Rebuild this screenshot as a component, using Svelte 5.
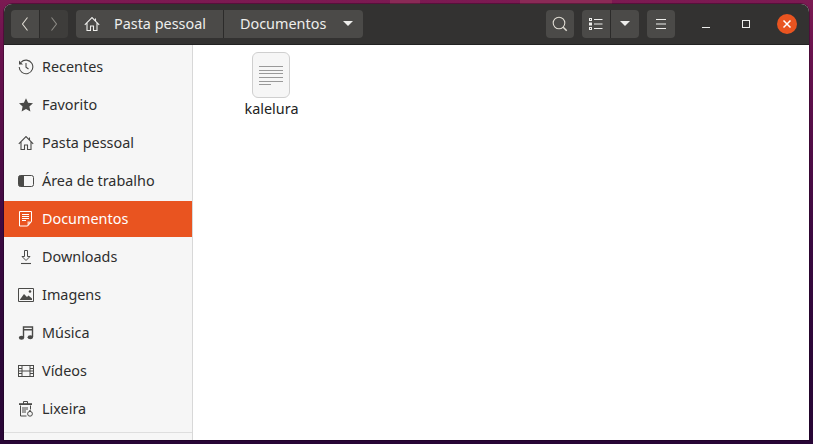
<script lang="ts">
  const places = [
    { name: 'Recentes', icon: 'recent' },
    { name: 'Favorito', icon: 'star' },
    { name: 'Pasta pessoal', icon: 'home' },
    { name: 'Área de trabalho', icon: 'desktop' },
    { name: 'Documentos', icon: 'docs', active: true },
    { name: 'Downloads', icon: 'download' },
    { name: 'Imagens', icon: 'image' },
    { name: 'Música', icon: 'music' },
    { name: 'Vídeos', icon: 'video' },
    { name: 'Lixeira', icon: 'trash' }
  ];
</script>

{#snippet homeIcon()}
  <path d="M.8 8.800 8 1.500l7.200 7.300M3 7v7.500h3.500v-4.500h3v4.500H13V7M11.500 2.500v2.500" fill="none" stroke="currentColor" stroke-width="1.100" />
{/snippet}

<div class="wallpaper">
  <div class="window">
    <header class="titlebar">
      <div class="group nav">
        <button class="tb-btn back" aria-label="Voltar">
          <svg width="16" height="16" viewBox="0 0 16 16"><path d="M10.500 1.500 5.500 8l5 6.500" fill="none" stroke="#dfdbd2" stroke-width="1.100" /></svg>
        </button>
        <button class="tb-btn forward" aria-label="Avançar">
          <svg width="16" height="16" viewBox="0 0 16 16"><path d="M5.500 1.500 10.500 8l-5 6.500" fill="none" stroke="#8d8b86" stroke-width="1.100" /></svg>
        </button>
      </div>

      <div class="group path">
        <button class="crumb home">
          <svg class="home-icon" width="16" height="16" viewBox="0 0 16 16">{@render homeIcon()}</svg>
          <span>Pasta pessoal</span>
        </button>
        <button class="crumb current">
          <span>Documentos</span>
          <i class="caret"></i>
        </button>
      </div>

      <div class="spacer"></div>

      <button class="tb-btn solo" aria-label="Pesquisar">
        <svg width="16" height="16" viewBox="0 0 16 16"><circle cx="7" cy="7" r="5.800" fill="none" stroke="#dfdbd2" stroke-width="1.100" /><path d="m11.200 11.200 3.500 3.500" stroke="#dfdbd2" stroke-width="1.500" /></svg>
      </button>

      <div class="group view">
        <button class="tb-btn list" aria-label="Lista">
          <svg width="14" height="14" viewBox="0 0 14 14">
            <g fill="none" stroke="#eeeeec"><rect x=".5" y="1.500" width="2" height="2" /><rect x=".5" y="6" width="2" height="2" /><rect x=".5" y="10.500" width="2" height="2" /></g>
            <path d="M5 2.500h8.500M5 7h8.500M5 11.500h8.500" stroke="#eeeeec" />
          </svg>
        </button>
        <button class="tb-btn drop" aria-label="Opções de visão"><i class="caret"></i></button>
      </div>

      <button class="tb-btn solo menu" aria-label="Menu">
        <svg width="14" height="14" viewBox="0 0 14 14"><path d="M2 2.500h10M2 7h10M2 11.500h10" stroke="#eeeeec" /></svg>
      </button>

      <div class="wm">
        <span class="wm-min"></span>
        <span class="wm-max"></span>
        <span class="wm-close">
          <svg width="10" height="10" viewBox="0 0 10 10"><path d="m1.500 1.500 7 7m0-7-7 7" stroke="#fff" stroke-width="1.500" /></svg>
        </span>
      </div>
    </header>

    <div class="body">
      <aside class="sidebar">
        <ul>
          {#each places as p}
            <li class:active={p.active}>
              <svg class="icon" width="16" height="16" viewBox="0 0 16 16">
                {#if p.icon === 'recent'}
                  <path d="M3 3.300A6.800 6.800 0 1 1 1.200 8" fill="none" stroke="currentColor" stroke-width="1.100" />
                  <path d="M1 1.500v4h4z" fill="currentColor" />
                  <path d="M8 4v4.300l2.500 1.700" fill="none" stroke="currentColor" stroke-width="1.100" />
                {:else if p.icon === 'star'}
                  <path d="m8 1.200 2.100 4.500 4.900.6-3.600 3.300 1 4.900L8 12.100l-4.400 2.400 1-4.900L1 6.300l4.900-.6z" fill="currentColor" />
                {:else if p.icon === 'home'}
                  {@render homeIcon()}
                {:else if p.icon === 'desktop'}
                  <rect x=".5" y="2.500" width="15" height="11" rx="2" fill="none" stroke="currentColor" />
                  <path d="M2.500 2.500H6v11H2.500a2 2 0 0 1-2-2v-7a2 2 0 0 1 2-2z" fill="currentColor" />
                {:else if p.icon === 'docs'}
                  <path d="M1.500 .5h12v10l-4 4.500h-8z" fill="none" stroke="currentColor" />
                  <path d="M9.500 15.500v-5h4.500z" fill="currentColor" opacity=".7" />
                  <path d="M4 3.500h7M4 5.500h7M4 7.500h7M4 9.500h4" stroke="currentColor" />
                {:else if p.icon === 'download'}
                  <path d="M6.500 1.500h3v6H12L8 11.500 4 7.500h2.500z" fill="none" stroke="currentColor" />
                  <path d="M3 14.500h10" stroke="currentColor" stroke-width="1.100" />
                {:else if p.icon === 'image'}
                  <path d="M.5 1.500h15v13H.5z" fill="none" stroke="currentColor" />
                  <path d="M2 12.500 6 7l3 3 1.500-1.500 3.500 3v1.500H2z" fill="currentColor" />
                  <circle cx="12" cy="4.500" r="1.300" fill="currentColor" />
                {:else if p.icon === 'music'}
                  <path d="M5.500 12.500V2h9v10M5.500 4.800h9" fill="none" stroke="currentColor" stroke-width="1.400" />
                  <ellipse cx="3.500" cy="12.800" rx="2.700" ry="2" fill="currentColor" />
                  <ellipse cx="12.300" cy="12.300" rx="2.700" ry="2" fill="currentColor" />
                {:else if p.icon === 'video'}
                  <rect x=".5" y="2.500" width="15" height="11" fill="none" stroke="currentColor" />
                  <path d="M4 2.500v11M12 2.500v11M4 8h8M.5 5.500H4M.5 8H4M.5 10.500H4M12 5.500h3.500M12 8h3.500M12 10.500h3.500" fill="none" stroke="currentColor" />
                {:else}
                  <path d="M2.500 4.500v10.500H8.500M12.500 4.500v4M1 3.500h13M5.500 3V.5h4V3" fill="none" stroke="currentColor" />
                  <path d="M1 2.200h13v1.300H1z" fill="currentColor" />
                  <path d="M5 6v6M7 6v6M9 6v3" stroke="currentColor" />
                  <circle cx="12" cy="12.800" r="2.400" fill="none" stroke="currentColor" />
                  <path d="M11 9.800h2" stroke="currentColor" />
                {/if}
              </svg>
              <span>{p.name}</span>
            </li>
          {/each}
        </ul>
        <div class="side-foot"></div>
      </aside>

      <main class="files">
        <div class="file">
          <div class="thumb">
            <span></span><span></span><span></span><span></span><span></span><span class="short"></span>
          </div>
          <div class="file-name">kalelura</div>
        </div>
      </main>
    </div>
  </div>
</div>

<style>
  :global(body) {
    margin: 0;
    overflow: hidden;
  }
  .wallpaper {
    box-sizing: border-box;
    width: 813px;
    height: 444px;
    padding: 4px;
    font-family: "Noto Sans", "Open Sans", sans-serif;
    font-size: 14.400px;
    background:
      linear-gradient(90deg, transparent 390px, #8a2a56 390px, #8a2a56 420px, transparent 420px, transparent 520px, #8a2a56 520px, #8a2a56 612px, transparent 612px) top / 100% 4px no-repeat,
      linear-gradient(180deg, #7c1a52 0, #6a124e 12%, #4f0c46 35%, #3a0940 55%, #2c0738 80%, #280636 100%);
  }
  .window {
    display: flex;
    flex-direction: column;
    height: 100%;
    border-radius: 8px 8px 0 0;
    overflow: hidden;
    background: #fff;
    box-shadow: 0 0 0 1px rgba(20, 0, 20, 0.35);
  }
  .titlebar {
    display: flex;
    align-items: center;
    flex: none;
    box-sizing: border-box;
    height: 41px;
    padding: 0 13px 1px 7px;
    background: #333231;
    border-bottom: 1px solid #222;
    color: #eeeeec;
  }
  button {
    font: inherit;
    color: inherit;
    border: 0;
    padding: 0;
    margin: 0;
    background: #4b4a48;
    display: flex;
    align-items: center;
    justify-content: center;
  }
  .group {
    display: flex;
    height: 28px;
  }
  .tb-btn {
    height: 28px;
  }
  .nav {
    width: 57px;
  }
  .nav .tb-btn {
    width: 28px;
  }
  .back {
    border-radius: 4px 0 0 4px;
    border-right: 1px solid #2c2b2a !important;
    width: 29px !important;
  }
  .forward {
    border-radius: 0 4px 4px 0;
    background: #3e3d3b;
  }
  .path {
    margin-left: 8px;
    width: 287px;
  }
  .crumb {
    height: 28px;
    white-space: nowrap;
  }
  .home {
    width: 148px;
    border-radius: 4px 0 0 4px;
    border-right: 1px solid #2c2b2a;
    justify-content: flex-start;
    padding-left: 8px;
    box-sizing: border-box;
  }
  .home span {
    margin-left: 14px;
  }
  .home-icon {
    color: #eeeeec;
  }
  .current {
    flex: 1;
    border-radius: 0 4px 4px 0;
    justify-content: flex-start;
    padding-left: 16px;
  }
  .current .caret {
    margin-left: 17px;
  }
  .caret {
    display: block;
    width: 0;
    height: 0;
    border-left: 5px solid transparent;
    border-right: 5px solid transparent;
    border-top: 5px solid #eeeeec;
  }
  .spacer {
    flex: 1;
  }
  .solo {
    width: 28px;
    border-radius: 4px;
  }
  .view {
    margin-left: 8px;
  }
  .list {
    width: 29px;
    border-radius: 4px 0 0 4px;
    border-right: 1px solid #2c2b2a;
  }
  .drop {
    width: 28px;
    border-radius: 0 4px 4px 0;
  }
  .menu {
    margin-left: 8px;
  }
  .wm {
    display: flex;
    align-items: center;
    margin-left: 24px;
    margin-right: -1px;
  }
  .wm-min {
    width: 8px;
    height: 1px;
    background: #eeeeec;
    margin: 8px 0 0 3px;
  }
  .wm-max {
    width: 6px;
    height: 6px;
    border: 1px solid #eeeeec;
    margin-left: 32px;
  }
  .wm-close {
    display: flex;
    align-items: center;
    justify-content: center;
    width: 20px;
    height: 20px;
    border-radius: 50%;
    background: #e95420;
    margin-left: 27px;
  }
  .body {
    display: flex;
    flex: 1;
    min-height: 0;
  }
  .sidebar {
    display: flex;
    flex-direction: column;
    flex: none;
    box-sizing: border-box;
    width: 189px;
    background: #f6f6f6;
    border-right: 1px solid #d8d8d8;
    color: #2e2e2e;
  }
  ul {
    list-style: none;
    margin: 4px 0 0;
    padding: 0;
    flex: 1;
  }
  li {
    display: flex;
    align-items: center;
    height: 36px;
    margin-bottom: 2px;
    padding-left: 14px;
    white-space: nowrap;
  }
  li span {
    padding-bottom: 1px;
  }
  li .icon {
    flex: none;
    margin-right: 8px;
    color: #4a4a48;
  }
  li.active {
    background: #e95420;
    color: #fff;
    width: 188px;
    box-sizing: border-box;
  }
  li.active .icon {
    color: #fff;
  }
  .side-foot {
    height: 7px;
    border-top: 1px solid #dedede;
  }
  .files {
    flex: 1;
    background: #fff;
    padding: 7px 0 0 39px;
  }
  .file {
    display: flex;
    flex-direction: column;
    align-items: center;
    width: 78px;
    color: #2e2e2e;
  }
  .thumb {
    display: flex;
    flex-direction: column;
    align-items: flex-start;
    gap: 2.700px;
    box-sizing: border-box;
    width: 38px;
    height: 46px;
    padding: 13px 6px 0;
    background: #f6f6f6;
    border: 1px solid #cfcfcf;
    border-radius: 6px;
  }
  .thumb span {
    display: block;
    width: 24px;
    height: 1px;
    background: #999;
  }
  .thumb .short {
    width: 12px;
  }
  .file-name {
    line-height: 18px;
    margin-top: 2px;
    padding-left: 1px;
    color: #222;
  }
</style>
